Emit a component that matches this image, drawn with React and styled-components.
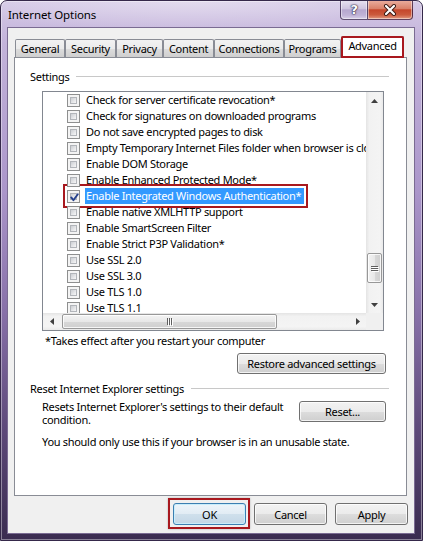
import React from "react";
import styled, { createGlobalStyle, css } from "styled-components";

const GlobalStyle = createGlobalStyle`
  html, body { margin: 0; padding: 0; background: #fff; }
  body {
    font-family: "Noto Sans", "Open Sans", sans-serif;
    font-size: 11px;
    letter-spacing: -0.3px;
    color: #000;
  }
  * { box-sizing: border-box; }
`;

const Window = styled.div`
  width: 423px;
  height: 541px;
  display: flex;
  flex-direction: column;
  border: 1px solid #35284a;
  border-radius: 7px 7px 0 0;
  overflow: hidden;
  background:
    radial-gradient(ellipse 60% 30px at 45% 0, rgba(255, 255, 255, 0.35), transparent),
    linear-gradient(180deg, #d4c8e6 0%, #c3b3da 8%, #ab96ca 35%, #8770a8 58%, #5c4878 80%, #3a2c50 100%);
  box-shadow: inset 0 0 0 1px rgba(255, 255, 255, 0.4);
`;

const TitleBar = styled.div`
  height: 27px;
  display: flex;
  align-items: flex-start;
  justify-content: space-between;
  padding-left: 7px;
  padding-right: 9px;
  flex: none;
`;

const Title = styled.div`
  padding-top: 7px;
  line-height: 14px;
  font-size: 11.5px;
  letter-spacing: -0.1px;
`;

const Captions = styled.div`
  display: flex;
  margin-top: -1px;
`;

const CaptionButton = styled.div`
  height: 20px;
  width: ${(p) => p.$w}px;
  display: flex;
  align-items: center;
  justify-content: center;
  border: 1px solid rgba(50, 30, 70, 0.75);
  border-top: none;
  box-shadow: inset 0 0 0 1px rgba(255, 255, 255, 0.45);
  ${(p) =>
    p.$close
      ? css`
          border-radius: 0 0 4px 0;
          border-left: none;
          background: linear-gradient(180deg, #ebb0a2 0%, #d9816a 45%, #c5462b 52%, #cb5a3d 78%, #e39a82 100%);
        `
      : css`
          border-radius: 0 0 0 4px;
          background: linear-gradient(180deg, #e9e3f2 0%, #cfc4e0 45%, #b6a7cf 52%, #c0b3d7 80%, #d8cfe8 100%);
        `}
`;

const HelpGlyph = styled.span`
  font-family: "DejaVu Sans", sans-serif;
  font-weight: bold;
  font-size: 13px;
  color: #fff;
  text-shadow: 0 0 1px #2c2340, 0 0 1px #2c2340, 0 0 2px #2c2340;
  line-height: 1;
`;

const Client = styled.div`
  flex: 1;
  margin: 0 8px 7px 7px;
  background: #f0f0f0;
  box-shadow: 0 0 0 1px #7a6b92;
  padding: 8px 7px 8px 6px;
  display: flex;
  flex-direction: column;
`;

const TabStrip = styled.div`
  height: 21px;
  display: flex;
  align-items: flex-end;
  padding-left: 1px;
  position: relative;
  z-index: 1;
  flex: none;
`;

const Tab = styled.div`
  width: ${(p) => p.$w}px;
  height: 18px;
  border: 1px solid #898c95;
  border-bottom: none;
  border-radius: 2px 2px 0 0;
  background: linear-gradient(180deg, #f2f2f2 0%, #ebebeb 50%, #dddddd 51%, #cfcfcf 100%);
  display: flex;
  align-items: center;
  justify-content: center;
  line-height: 14px;
  ${(p) =>
    p.$active &&
    css`
      height: 22px;
      margin-bottom: -1px;
      background: #fff;
      padding-bottom: 3px;
    `}
  ${(p) =>
    p.$marked &&
    css`
      outline: 2px solid #a8181e;
      outline-offset: -2px;
    `}
`;

const Panel = styled.div`
  height: 439px;
  flex: none;
  background: #fff;
  border: 1px solid #898c95;
  padding: 10px 17px 0 15px;
  display: flex;
  flex-direction: column;
`;

const SectionHeader = styled.div`
  display: flex;
  align-items: center;
  gap: 7px;
  height: 16px;
  margin-top: ${(p) => p.$top || 0}px;
  &::after {
    content: "";
    flex: 1;
    height: 1px;
    background: #c8c8c8;
  }
`;

const ListBox = styled.div`
  margin: 7px 5px 0 12px;
  height: 240px;
  border: 1px solid #828790;
  display: grid;
  grid-template-columns: 1fr 17px;
  grid-template-rows: 1fr 17px;
  flex: none;
`;

const Viewport = styled.div`
  overflow: hidden;
  background: #fff;
`;

const Row = styled.div`
  height: 16px;
  display: flex;
  align-items: center;
  padding-left: 24px;
  white-space: nowrap;
`;

const Marked = styled.span`
  display: flex;
  align-items: center;
  height: 16px;
  outline: 2px solid #a8181e;
  outline-offset: 2px;
`;

const Check = styled.span`
  position: relative;
  width: 13px;
  height: 13px;
  flex: none;
  border: 1px solid #8e8f8f;
  background: #f4f4f4;
  margin-right: 5px;
  &::before {
    content: "";
    position: absolute;
    inset: 2px;
    border: 1px solid #b2b5ba;
    background: linear-gradient(135deg, #cbced3 0%, #e6e7e9 60%, #f7f7f7 100%);
  }
  svg {
    position: absolute;
    left: 1px;
    top: 1px;
    z-index: 1;
  }
`;

const Label = styled.span`
  line-height: 16px;
  padding: 0 3px 0 1px;
  ${(p) =>
    p.$selected &&
    css`
      background: #3399ff;
      color: #fff;
    `}
`;

const ScrollV = styled.div`
  display: flex;
  flex-direction: column;
  background: linear-gradient(90deg, #e4e4e4 0%, #f2f2f2 20%, #f4f4f4 80%, #eaeaea 100%);
`;

const ScrollH = styled.div`
  display: flex;
  background: linear-gradient(180deg, #e4e4e4 0%, #f2f2f2 20%, #f4f4f4 80%, #eaeaea 100%);
`;

const Corner = styled.div`
  background: #f0f0f0;
`;

const Arrow = styled.div`
  width: 17px;
  height: 17px;
  flex: none;
  display: flex;
  align-items: center;
  justify-content: center;
`;

const Track = styled.div`
  flex: 1;
  display: flex;
  flex-direction: ${(p) => (p.$vertical ? "column" : "row")};
`;

const Thumb = styled.div`
  flex: none;
  border: 1px solid #989898;
  border-radius: 2px;
  display: flex;
  align-items: center;
  justify-content: center;
  box-shadow: inset 0 0 0 1px rgba(255, 255, 255, 0.8);
  ${(p) =>
    p.$vertical
      ? css`
          width: 15px;
          margin-left: 1px;
          height: ${p.$size}px;
          margin-top: ${p.$offset}px;
          background: linear-gradient(90deg, #f3f3f3 0%, #e8e8e8 50%, #d8d8d8 51%, #cfcfcf 100%);
        `
      : css`
          height: 15px;
          margin-top: 1px;
          width: ${p.$size}px;
          margin-left: ${p.$offset}px;
          background: linear-gradient(180deg, #f3f3f3 0%, #e8e8e8 50%, #d8d8d8 51%, #cfcfcf 100%);
        `}
`;

const Grip = styled.span`
  display: flex;
  flex-direction: ${(p) => (p.$vertical ? "column" : "row")};
  gap: 1px;
  span {
    background: #5e5e5e;
    box-shadow: 1px 1px 0 #fff;
    ${(p) => (p.$vertical ? "width: 7px; height: 1px;" : "width: 1px; height: 7px;")}
  }
`;

const Footnote = styled.div`
  margin-top: 2px;
  padding-left: 15px;
  line-height: 16px;
`;

const Button = styled.button`
  position: relative;
  font: inherit;
  letter-spacing: inherit;
  color: #000;
  width: ${(p) => p.$w}px;
  height: 22px;
  padding: 0;
  border: 1px solid #707070;
  border-radius: 3px;
  background: linear-gradient(180deg, #f2f2f2 0%, #ebebeb 50%, #dddddd 51%, #cfcfcf 100%);
  box-shadow: inset 0 0 0 1px rgba(255, 255, 255, 0.75);
  flex: none;
  ${(p) =>
    p.$default &&
    css`
      border-color: #3c7fb1;
      background: linear-gradient(180deg, #eef5fa 0%, #e1ecf4 50%, #cfe0ec 51%, #c3d7e6 100%);
      box-shadow: inset 0 0 0 1px #c9eefc;
    `}
  ${(p) =>
    p.$marked &&
    css`
      &::after {
        content: "";
        position: absolute;
        inset: -6px -5px -5px -6px;
        border: 2px solid #a8181e;
        box-shadow: 0 0 2px rgba(0, 0, 0, 0.25);
      }
    `}
`;

const RestoreButton = styled(Button)`
  align-self: flex-end;
  margin: 4px 3px 0 0;
  height: 21px;
`;

const ResetRow = styled.div`
  display: flex;
  justify-content: space-between;
  margin-top: 4px;
  padding: 0 3px 0 12px;
`;

const ResetText = styled.div`
  width: 250px;
  line-height: 13px;
`;

const ResetButton = styled(Button)`
  margin-top: 1px;
  height: 21px;
`;

const Note = styled.div`
  margin-top: 8px;
  padding-left: 12px;
  line-height: 16px;
`;

const ButtonRow = styled.div`
  display: flex;
  justify-content: flex-end;
  gap: 8px;
  margin-top: 7px;
  margin-right: -1px;
`;

const tabs = [
  { name: "General", w: 50 },
  { name: "Security", w: 51 },
  { name: "Privacy", w: 47 },
  { name: "Content", w: 51 },
  { name: "Connections", w: 70 },
  { name: "Programs", w: 57 },
  { name: "Advanced", w: 63, active: true },
];

const settings = [
  "Check for server certificate revocation*",
  "Check for signatures on downloaded programs",
  "Do not save encrypted pages to disk",
  "Empty Temporary Internet Files folder when browser is closed",
  "Enable DOM Storage",
  "Enable Enhanced Protected Mode*",
  "Enable Integrated Windows Authentication*",
  "Enable native XMLHTTP support",
  "Enable SmartScreen Filter",
  "Enable Strict P3P Validation*",
  "Use SSL 2.0",
  "Use SSL 3.0",
  "Use TLS 1.0",
  "Use TLS 1.1",
];

const selectedSetting = "Enable Integrated Windows Authentication*";

const Tick = () => (
  <svg width="11" height="11" viewBox="0 0 11 11">
    <path d="M2.2 5.4 L4.4 8.2 L8.8 2.2" fill="none" stroke="#24408c" strokeWidth="1.9" strokeLinecap="round" strokeLinejoin="round" />
  </svg>
);

const Tri = ({ dir }) => {
  const pts = {
    up: "0,4 3.5,0 7,4",
    down: "0,0 7,0 3.5,4",
    left: "4,0 4,7 0,3.5",
    right: "0,0 0,7 4,3.5",
  }[dir];
  const vertical = dir === "up" || dir === "down";
  return (
    <svg width={vertical ? 7 : 4} height={vertical ? 4 : 7} viewBox={vertical ? "0 0 7 4" : "0 0 4 7"}>
      <polygon points={pts} fill="#404040" />
    </svg>
  );
};

const CloseGlyph = () => (
  <svg width="14" height="12" viewBox="0 0 14 12">
    <path d="M3 2 L11 10 M11 2 L3 10" stroke="#3a1a14" strokeWidth="4" strokeLinecap="round" />
    <path d="M3 2 L11 10 M11 2 L3 10" stroke="#fff" strokeWidth="2.2" strokeLinecap="round" />
  </svg>
);

const SettingRow = ({ text }) => {
  const selected = text === selectedSetting;
  const body = (
    <>
      <Check>{selected && <Tick />}</Check>
      <Label $selected={selected}>{text}</Label>
    </>
  );
  return <Row>{selected ? <Marked>{body}</Marked> : body}</Row>;
};

export default function App() {
  return (
    <>
      <GlobalStyle />
      <Window>
        <TitleBar>
          <Title>Internet Options</Title>
          <Captions>
            <CaptionButton $w={28}>
              <HelpGlyph>?</HelpGlyph>
            </CaptionButton>
            <CaptionButton $w={45} $close>
              <CloseGlyph />
            </CaptionButton>
          </Captions>
        </TitleBar>
        <Client>
          <TabStrip>
            {tabs.map((t) => (
              <Tab key={t.name} $w={t.w} $active={t.active} $marked={t.active}>
                {t.name}
              </Tab>
            ))}
          </TabStrip>
          <Panel>
            <SectionHeader>Settings</SectionHeader>
            <ListBox>
              <Viewport>
                {settings.map((s) => (
                  <SettingRow key={s} text={s} />
                ))}
              </Viewport>
              <ScrollV>
                <Arrow>
                  <Tri dir="up" />
                </Arrow>
                <Track $vertical>
                  <Thumb $vertical $size={30} $offset={144}>
                    <Grip $vertical>
                      <span />
                      <span />
                      <span />
                    </Grip>
                  </Thumb>
                </Track>
                <Arrow>
                  <Tri dir="down" />
                </Arrow>
              </ScrollV>
              <ScrollH>
                <Arrow>
                  <Tri dir="left" />
                </Arrow>
                <Track>
                  <Thumb $size={215} $offset={2}>
                    <Grip>
                      <span />
                      <span />
                      <span />
                    </Grip>
                  </Thumb>
                </Track>
                <Arrow>
                  <Tri dir="right" />
                </Arrow>
              </ScrollH>
              <Corner />
            </ListBox>
            <Footnote>*Takes effect after you restart your computer</Footnote>
            <RestoreButton $w={149}>Restore advanced settings</RestoreButton>
            <SectionHeader $top={6}>Reset Internet Explorer settings</SectionHeader>
            <ResetRow>
              <ResetText>Resets Internet Explorer's settings to their default condition.</ResetText>
              <ResetButton $w={87}>Reset...</ResetButton>
            </ResetRow>
            <Note>You should only use this if your browser is in an unusable state.</Note>
          </Panel>
          <ButtonRow>
            <Button $w={73} $default $marked>
              OK
            </Button>
            <Button $w={73}>Cancel</Button>
            <Button $w={73}>Apply</Button>
          </ButtonRow>
        </Client>
      </Window>
    </>
  );
}
